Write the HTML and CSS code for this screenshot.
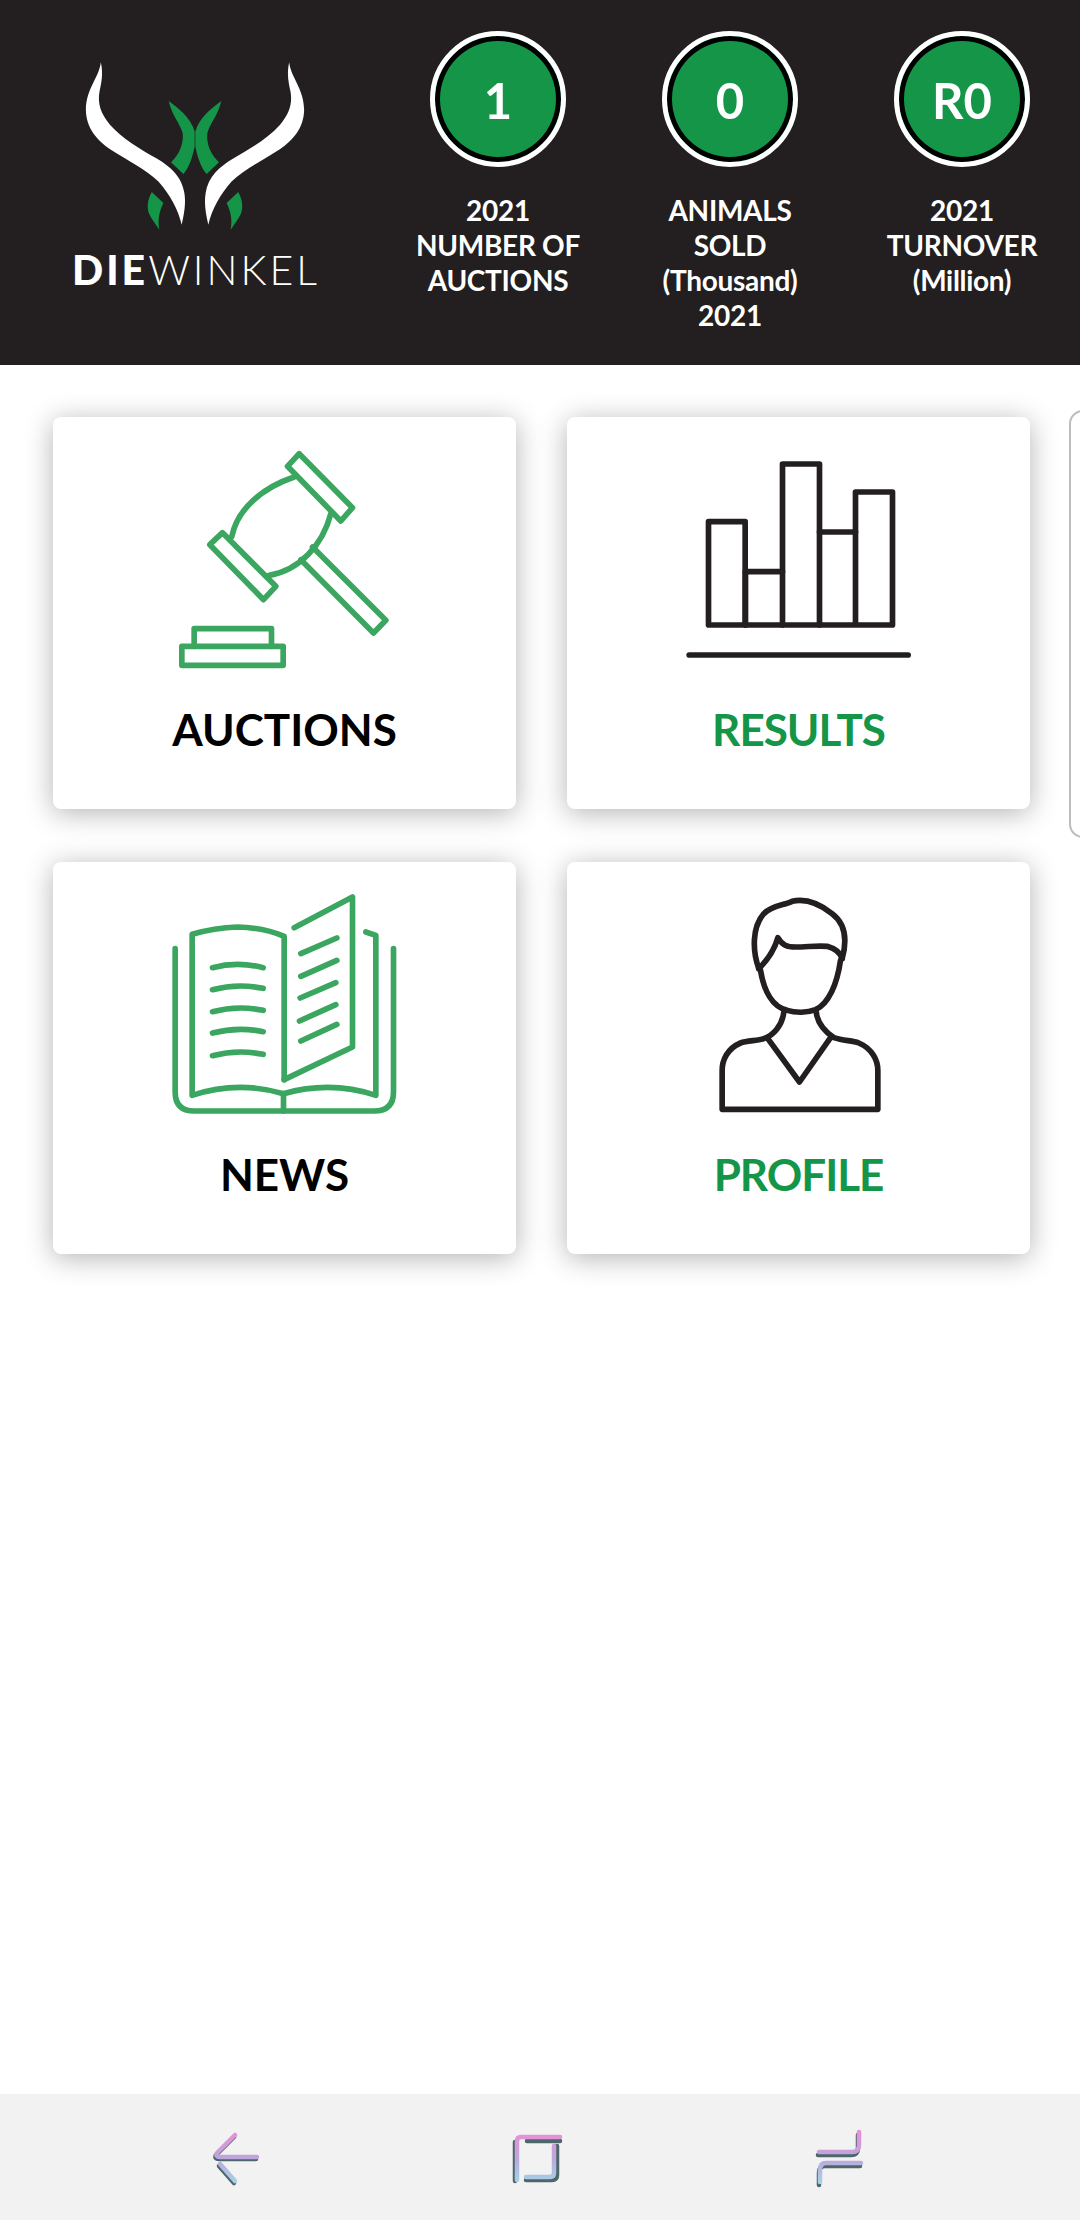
FILE: index.html
```html
<!DOCTYPE html>
<html lang="en">
<head>
    <meta charset="UTF-8">
    <title>Die Winkel</title>
    <link rel="stylesheet" href="styles.css">
</head>
<body>
<div class="page">
    <!--top bar-->
    <header class="top">
        <div class="logo">
            <svg class="logo-mark" viewBox="240 180 690 520" width="230" height="173">
                <g>
                    <path class="horn" d="M302 187C296 235 258 265 257 330C258 385 290 420 330 448C375 478 440 510 475 545C510 585 535 630 545 675C553 640 558 610 553 580C546 530 510 500 470 476C420 447 365 415 330 375C300 340 292 310 298 275C303 250 310 225 302 187Z"/>
                    <path class="leaf" d="M506 303C530 322 572 350 584 395V440C576 480 565 505 550 523L513 487C540 462 551 430 548 400C540 370 515 345 506 303Z"/>
                    <path class="leaf" d="M455 577C442 600 440 625 447 642C455 660 468 675 478 690C472 660 478 635 490 610Z"/>
                </g>
                <g transform="translate(1170 0) scale(-1 1)">
                    <path class="horn" d="M302 187C296 235 258 265 257 330C258 385 290 420 330 448C375 478 440 510 475 545C510 585 535 630 545 675C553 640 558 610 553 580C546 530 510 500 470 476C420 447 365 415 330 375C300 340 292 310 298 275C303 250 310 225 302 187Z"/>
                    <path class="leaf" d="M506 303C530 322 572 350 584 395V440C576 480 565 505 550 523L513 487C540 462 551 430 548 400C540 370 515 345 506 303Z"/>
                    <path class="leaf" d="M455 577C442 600 440 625 447 642C455 660 468 675 478 690C472 660 478 635 490 610Z"/>
                </g>
            </svg>
            <div class="logo-name"><b>DIE</b>WINKEL</div>
        </div>
        <div class="stat">
            <div class="ring">1</div>
            <p>2021<br>NUMBER OF<br>AUCTIONS</p>
        </div>
        <div class="stat">
            <div class="ring">0</div>
            <p>ANIMALS<br>SOLD<br>(Thousand)<br>2021</p>
        </div>
        <div class="stat">
            <div class="ring">R0</div>
            <p>2021<br>TURNOVER<br>(Million)</p>
        </div>
    </header>

    <!--menu cards-->
    <main class="main">
        <div class="menu">
            <a class="card">
                <svg class="icon green" viewBox="68 50 1386 840">
                    <path d="M805 160L965 322L930 362L770 198Z"/>
                    <path d="M575 397L735 558L698 598L537 433Z"/>
                    <path d="M790 230C695 262 620 325 603 408"/>
                    <path d="M900 340C875 435 805 510 715 525"/>
                    <path d="M845 440L1065 660L1028 698L810 478"/>
                    <path d="M490 738V685H722V738"/>
                    <path d="M453 738H757V795H453Z"/>
                </svg>
                <span class="label">AUCTIONS</span>
            </a>
            <a class="card">
                <svg class="icon dark" viewBox="0 0 1386 840">
                    <path d="M423 314H533V624H423Z"/>
                    <path d="M534 464H645"/>
                    <path d="M534 624V464M645 624V141H756V624"/>
                    <path d="M756 345H864"/>
                    <path d="M864 624V225H975V624H534"/>
                    <path d="M365 714H1022"/>
                </svg>
                <span class="label label-green">RESULTS</span>
            </a>
            <a class="card">
                <svg class="icon green" viewBox="68 35 1386 840">
                    <path d="M433 295V725Q433 782 490 782H1030Q1088 782 1088 725V295"/>
                    <path d="M758 730V782"/>
                    <path d="M760 688V258Q700 232 620 230Q550 232 484 252V735Q620 690 758 730Q900 690 1035 735V255L1005 245"/>
                    <path d="M790 232L965 140V590L760 688"/>
                    <path d="M545 352Q620 332 697 352"/>
                    <path d="M545 418Q620 398 697 414"/>
                    <path d="M545 484Q620 464 697 480"/>
                    <path d="M545 548Q620 528 697 544"/>
                    <path d="M545 616Q620 596 697 612"/>
                    <path d="M810 310L918 263"/>
                    <path d="M810 378L918 330"/>
                    <path d="M808 443L915 397"/>
                    <path d="M806 512L915 463"/>
                    <path d="M810 572L918 522"/>
                </svg>
                <span class="label">NEWS</span>
            </a>
            <a class="card">
                <svg class="icon dark" viewBox="51 35 1386 840">
                    <path d="M625 355C605 300 605 230 640 190C665 165 700 165 725 153C760 145 800 155 845 190C885 220 890 270 875 325"/>
                    <path d="M625 355C650 330 670 305 682 262C695 285 710 290 735 290C770 290 800 285 830 288C855 295 870 310 875 325"/>
                    <path d="M630 360C640 420 665 470 710 480C735 488 770 488 795 478C835 460 860 400 870 330"/>
                    <path d="M700 485C695 525 670 555 640 565C620 572 590 570 570 578C530 595 515 630 515 660V777H982V660C982 630 965 595 925 578C905 570 880 572 850 562C825 545 800 520 797 483"/>
                    <path d="M652 565L747 695L838 565"/>
                </svg>
                <span class="label label-green">PROFILE</span>
            </a>
        </div>
        <!--next slide peeking in-->
        <div class="peek"></div>
    </main>

    <!--phone buttons-->
    <nav class="nav">
        <svg class="nav-icon" viewBox="205 2125 60 65" width="60" height="65">
            <defs>
                <linearGradient id="shine" gradientUnits="userSpaceOnUse" x1="0" y1="2132" x2="0" y2="2183">
                    <stop offset="0" stop-color="#ea8fd6"/>
                    <stop offset=".5" stop-color="#bda6dc"/>
                    <stop offset="1" stop-color="#a4d2e8"/>
                </linearGradient>
            </defs>
            <g class="shade" transform="translate(-1 2)">
                <path d="M235 2135L217 2153Q215 2157 220 2157H257"/>
                <path d="M220 2164L235 2181"/>
            </g>
            <g class="shine">
                <path d="M235 2135L217 2153Q215 2157 220 2157H257"/>
                <path d="M220 2164L235 2181"/>
            </g>
        </svg>
        <svg class="nav-icon" viewBox="507 2125 60 65" width="60" height="65">
            <g class="shade">
                <path d="M560 2141H527"/>
                <path d="M515 2142V2181"/>
                <path d="M557 2146V2175Q557 2180 552 2180H526"/>
            </g>
            <g class="shine">
                <path d="M560 2137H521Q517 2137 517 2141V2180"/>
                <path d="M554 2146V2173Q554 2177 550 2177H526"/>
            </g>
        </svg>
        <svg class="nav-icon" viewBox="810 2125 60 65" width="60" height="65">
            <g class="shade" transform="translate(-1 3)">
                <path d="M820 2152H853Q860 2152 860 2145V2132"/>
                <path d="M862 2163H827Q821 2163 821 2170V2182"/>
            </g>
            <g class="shine">
                <path d="M820 2152H853Q860 2152 860 2145V2132"/>
                <path d="M862 2163H827Q821 2163 821 2170V2182"/>
            </g>
        </svg>
    </nav>
</div>
</body>
</html>
```

FILE: styles.css
```css
*{
    margin: 0;
    padding: 0;
    box-sizing: border-box;
}
body{
    font-family: "Lato", "Liberation Sans", sans-serif;
    background-color: #fff;
}
.page{
    width: 1080px;
    height: 2220px;
    display: flex;
    flex-direction: column;
    overflow: hidden;
}

/*top bar*/
.top{
    height: 365px;
    flex: none;
    display: flex;
    background-color: #231f20;
}
.logo{
    width: 382px;
    padding: 60px 0 0 72px;
    color: #fff;
}
.logo-mark{
    display: block;
    margin-left: 8px;
}
.horn{
    fill: #fff;
}
.leaf{
    fill: #149548;
}
.logo-name{
    margin-top: 13px;
    font-size: 41px;
    line-height: 48px;
    font-weight: 300;
    letter-spacing: 3px;
    white-space: nowrap;
}
.logo-name b{
    font-weight: 900;
}
.stat{
    width: 232px;
    padding-top: 31px;
    color: #fff;
    text-align: center;
}
.ring{
    width: 136px;
    height: 136px;
    margin: 0 auto;
    border: 5px solid #fff;
    border-radius: 50%;
    background-color: #149548;
    box-shadow: inset 0 0 0 5px #000;
    font-size: 49px;
    line-height: 128px;
    font-weight: 700;
}
.stat p{
    margin-top: 26px;
    font-size: 28px;
    line-height: 35px;
    font-weight: 700;
    letter-spacing: -.3px;
}

/*menu cards*/
.main{
    flex: 1;
    display: flex;
    align-items: flex-start;
    overflow: hidden;
    padding: 52px 0 0 53px;
}
.menu{
    flex: none;
    display: grid;
    grid-template-columns: 463px 463px;
    grid-auto-rows: 392px;
    gap: 53px 51px;
}
.card{
    display: block;
    background-color: #fff;
    border-radius: 8px;
    box-shadow: 0 4px 28px rgba(0,0,0,.3);
    text-align: center;
}
.icon{
    display: block;
    width: 463px;
    height: 280px;
    fill: none;
    stroke-width: 17;
    stroke-linecap: round;
    stroke-linejoin: round;
}
.green{
    stroke: #3ba660;
}
.dark{
    stroke: #231f20;
}
.label{
    display: block;
    margin-top: 4px;
    font-size: 44px;
    line-height: 56px;
    font-weight: 700;
    color: #000;
}
.label-green{
    letter-spacing: -1px;
    color: #149548;
}
.peek{
    flex: none;
    width: 120px;
    height: 428px;
    margin: -7px 0 0 39px;
    border: 2px solid #bcbcbc;
    border-radius: 14px;
}

/*phone buttons*/
.nav{
    height: 126px;
    flex: none;
    display: grid;
    grid-template-columns: repeat(3, 302px);
    justify-items: center;
    align-items: center;
    padding-left: 84px;
    background-color: #f2f2f2;
}
.nav-icon{
    fill: none;
    stroke-width: 4.5;
    stroke-linecap: round;
    stroke-linejoin: round;
}
.shade{
    stroke: #4c666a;
}
.shine{
    stroke: url(#shine);
}
```
